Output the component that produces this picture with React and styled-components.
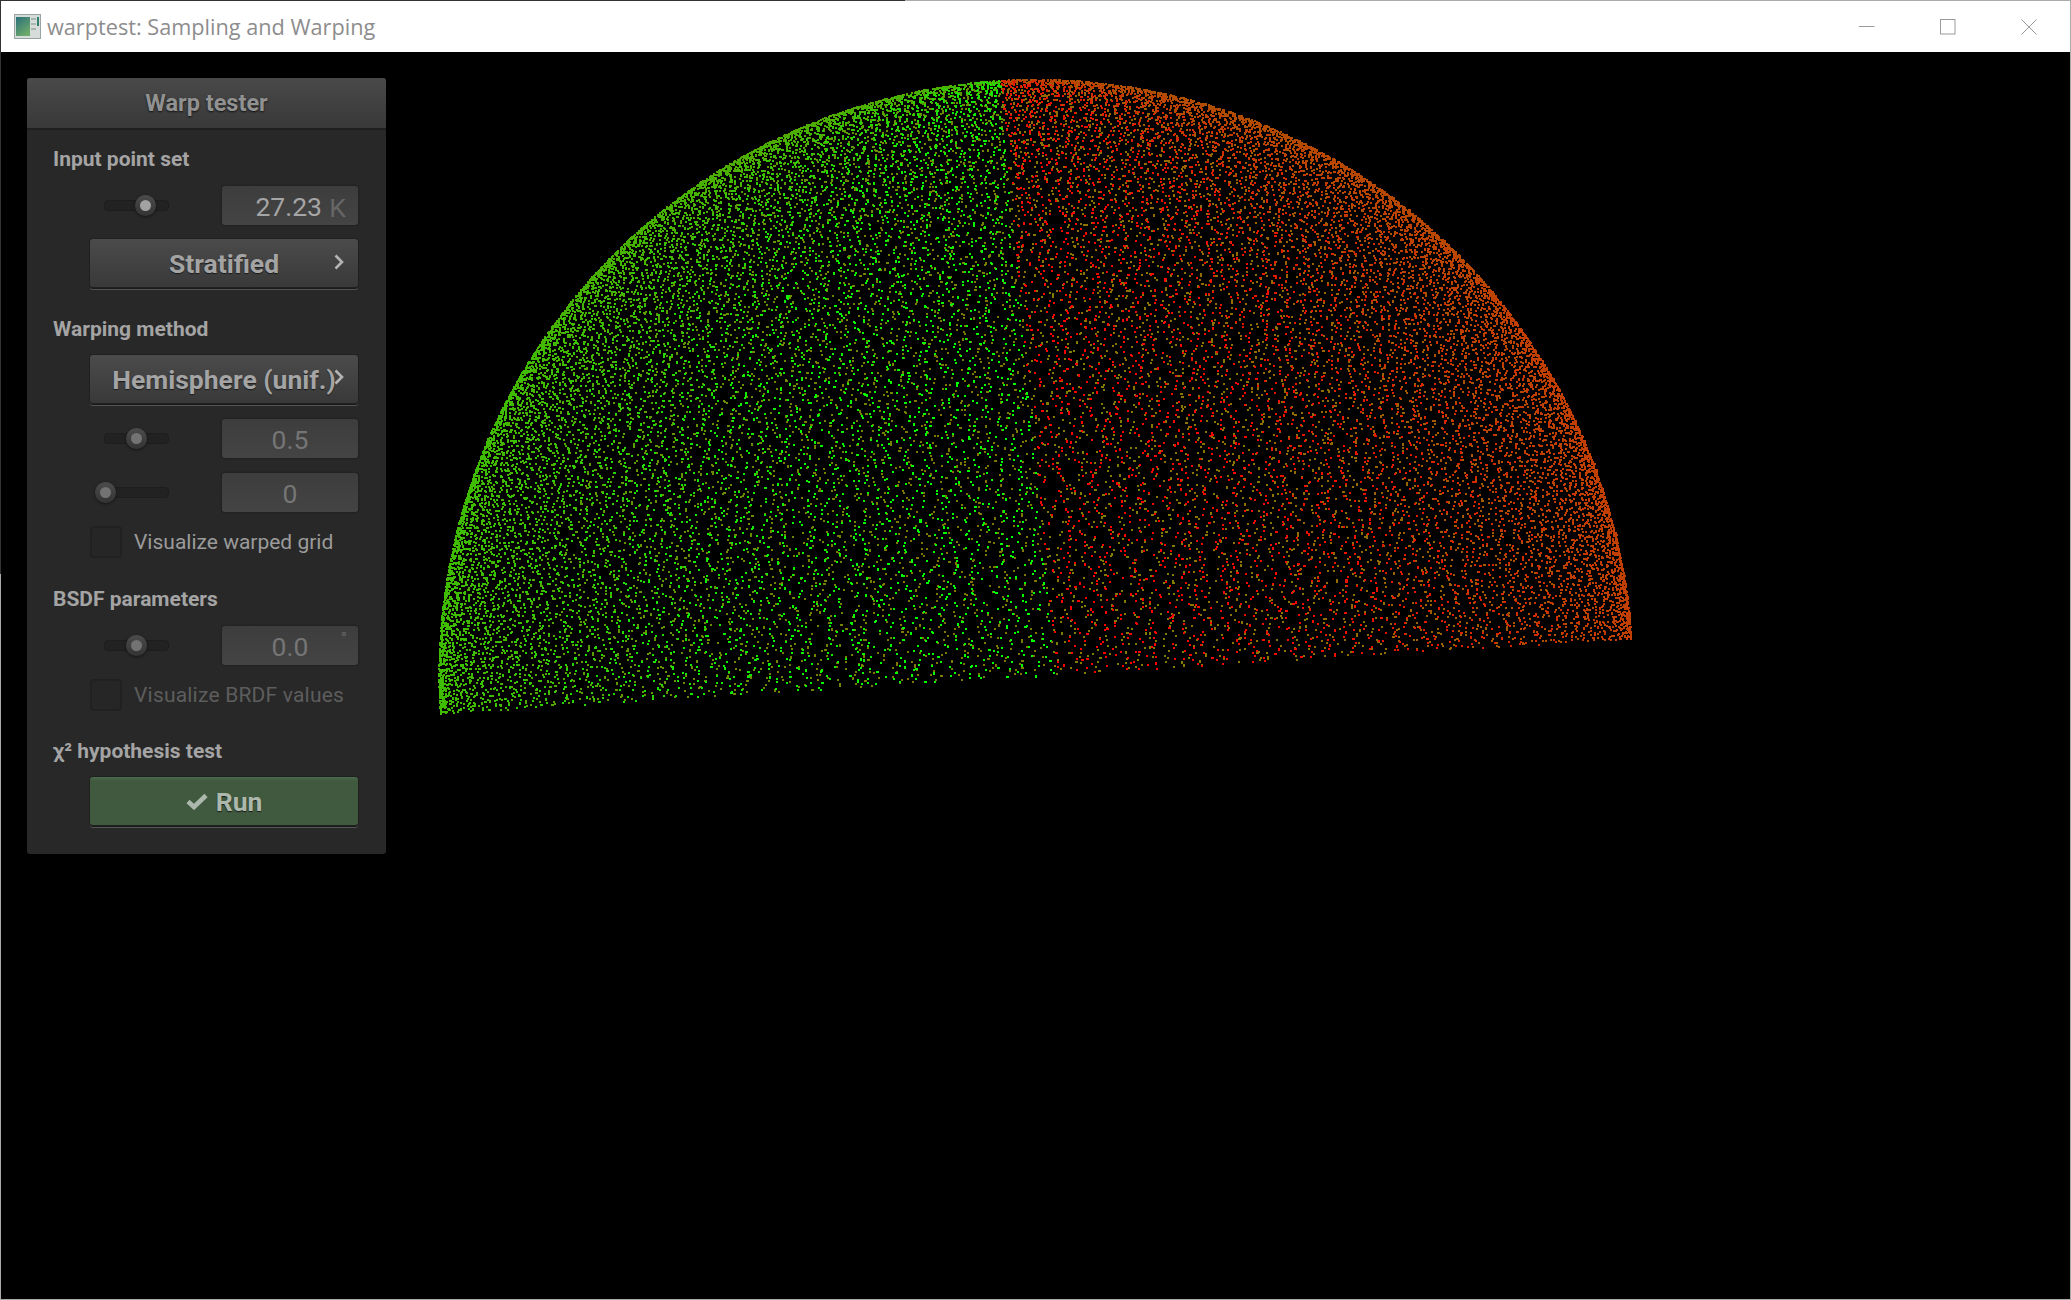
import { useMemo } from "react";
import styled, { createGlobalStyle } from "styled-components";

const GlobalStyle = createGlobalStyle`
  html, body { margin: 0; padding: 0; background: #000; }
`;

const Frame = styled.div`
  position: relative;
  box-sizing: border-box;
  width: 2071px;
  height: 1300px;
  display: flex;
  flex-direction: column;
  border: 1px solid #ababab;
  background: #000;
  /* the frame is darker along part of the top and left edge */
  &::before {
    content: "";
    position: absolute;
    left: -1px;
    top: -1px;
    width: 905px;
    height: 1px;
    background: #333;
  }
  &::after {
    content: "";
    position: absolute;
    left: -1px;
    top: -1px;
    width: 1px;
    height: 574px;
    background: #333;
  }
`;

const TitleBar = styled.div`
  flex: 0 0 51px;
  display: flex;
  align-items: center;
  background: #fff;
  padding-left: 13px;
`;

const WindowTitle = styled.span`
  margin-left: 6px;
  font: 400 21.7px "Open Sans", sans-serif;
  color: #8d8d8d;
  white-space: nowrap;
`;

const WindowButtons = styled.div`
  margin-left: auto;
  display: flex;
  margin-right: 33px;
  gap: 65px;
`;

const Viewport = styled.div`
  position: relative;
  flex: 1;
  background: #000;
  overflow: hidden;
`;

const Plot = styled.svg`
  display: block;
  width: 100%;
  height: 100%;
`;

const Panel = styled.div`
  position: absolute;
  left: 26px;
  top: 26px;
  width: 359px;
  border-radius: 3px;
  background: #282828;
  padding-bottom: 27px;
`;

const PanelHeader = styled.div`
  height: 50px;
  display: flex;
  align-items: center;
  justify-content: center;
  border-radius: 3px 3px 0 0;
  background: linear-gradient(#494949, #393939);
  border-bottom: 2px solid #1f1f1f;
  font: 700 23.5px Roboto, sans-serif;
  color: #919191;
  text-shadow: 0 1px 2px #111;
`;

const PanelBody = styled.div`
  padding: 0 28px 0 26px;
`;

const Section = styled.section`
  margin-top: ${(p) => p.$top}px;
`;

const SectionLabel = styled.div`
  height: 24px;
  font: 700 21px/24px Roboto, sans-serif;
  color: #a4a4a4;
  white-space: nowrap;
`;

const Stack = styled.div`
  margin-top: 14px;
  padding-left: 37px;
  display: flex;
  flex-direction: column;
  gap: 13px;
`;

const Row = styled.div`
  display: grid;
  grid-template-columns: 132px 136px;
  align-items: center;
  height: 41px;
`;

const SliderTrack = styled.div`
  position: relative;
  box-sizing: border-box;
  margin-left: 14px;
  width: 65px;
  height: 11px;
  border-radius: 4px;
  background: #222;
  border: 1px solid #1d1d1d;
`;

const SliderKnob = styled.div`
  position: absolute;
  top: 50%;
  width: 21px;
  height: 21px;
  margin: -10.5px 0 0 -10.5px;
  border-radius: 50%;
  background: linear-gradient(#4c4c4c, #333);
  box-shadow: 0 1px 3px #151515;
  display: flex;
  align-items: center;
  justify-content: center;
  &::after {
    content: "";
    width: 11px;
    height: 11px;
    border-radius: 50%;
    background: ${(p) => (p.$on ? "#a2a2a2" : "#737373")};
  }
`;

const NumberBox = styled.div`
  position: relative;
  box-sizing: border-box;
  height: 39px;
  border-radius: 3px;
  box-shadow: 0 0 0 1.5px #232323;
  background: linear-gradient(#3d3d3d, #444);
  display: flex;
  align-items: center;
  justify-content: ${(p) => (p.$unit ? "flex-end" : "center")};
  padding-right: ${(p) => (p.$unit ? "36px" : "0")};
  padding-top: 2px;
  font: 400 26.5px Roboto, sans-serif;
  color: ${(p) => (p.$on ? "#a5a5a5" : "#757575")};
`;

const Unit = styled.span`
  position: absolute;
  right: 12px;
  top: 6px;
  font: 400 26.5px Roboto, sans-serif;
  color: #666;
`;

const DegreeUnit = styled(Unit)`
  top: 2px;
  right: 11px;
  font-size: 17px;
`;

const PushButton = styled.div`
  position: relative;
  box-sizing: border-box;
  height: 48px;
  margin-bottom: 2px;
  border-radius: 3px;
  box-shadow: 0 0 0 1px #202020, 0 2px 0 #1a1a1a, 0 3px 0 #545454;
  background: ${(p) =>
    p.$green
      ? "linear-gradient(#4d6a4c 0, #40593f 8%, #3f5a3e 100%)"
      : "linear-gradient(#4b4b4b, #393939)"};
  display: flex;
  align-items: center;
  justify-content: center;
  gap: 8px;
  font: 700 26.5px Roboto, sans-serif;
  color: ${(p) => (p.$green ? "#adb8ac" : "#a4a4a4")};
  text-shadow: 0 1px 1px #1c1c1c;
  white-space: nowrap;
`;

const Chevron = styled.svg`
  position: absolute;
  right: 14px;
  top: ${(p) => p.$top}px;
`;

const CheckRow = styled.div`
  display: flex;
  align-items: center;
  gap: 12px;
  height: 31px;
`;

const CheckBox = styled.div`
  box-sizing: border-box;
  width: 32px;
  height: 32px;
  border-radius: 4px;
  background: #262626;
  border: 2px solid #212121;
`;

const CheckLabel = styled.span`
  font: 400 21px Roboto, sans-serif;
  letter-spacing: ${(p) => (p.$on ? "0" : "0.2px")};
  color: ${(p) => (p.$on ? "#9b9b9b" : "#5d5d5d")};
  white-space: nowrap;
`;

// hemisphere placement in viewport pixels (edge-on, slightly rolled)
const CENTER = { x: 1034, y: 623.5 };
const RADIUS = 595.5;
const ROLL = 0.0628;
const COUNT_ROOT = 165;
const LEVELS = 14;

function mulberry(seed) {
  return () => {
    seed |= 0;
    seed = (seed + 0x6d2b79f5) | 0;
    let t = Math.imul(seed ^ (seed >>> 15), 1 | seed);
    t = (t + Math.imul(t ^ (t >>> 7), 61 | t)) ^ t;
    return ((t ^ (t >>> 14)) >>> 0) / 4294967296;
  };
}

function buildPoints() {
  const rand = mulberry(2071);
  const buckets = { g: [], r: [] };
  ["g", "r"].forEach((k) => {
    for (let i = 0; i <= LEVELS; i++) buckets[k].push([]);
  });

  for (let i = 0; i < COUNT_ROOT; i++) {
    for (let j = 0; j < COUNT_ROOT; j++) {
      const z = (i + rand()) / COUNT_ROOT;
      const phi = ((j + rand()) / COUNT_ROOT) * Math.PI * 2;
      const rho = Math.sqrt(1 - z * z);
      const a = rho * Math.cos(phi);
      const px = Math.round(CENTER.x + RADIUS * (a - z * ROLL));
      const py = Math.round(CENTER.y - RADIUS * (z + a * ROLL));
      // split line between the two halves
      const side = px < 999 + 0.09 * (py - 27) ? "g" : "r";
      // depth decides how far a point sits from the mid colour
      const s = Math.sin(phi);
      const abs = Math.abs(s);
      let depth = Math.sign(s) * Math.pow(abs, 2) * Math.pow(rho, 0.25);
      // the rim turns more olive towards the top of the dome
      depth -= 0.35 * Math.pow(z, 3) * (1 - abs);
      depth = Math.max(-1, Math.min(1, depth));
      const level = Math.round(((depth + 1) / 2) * LEVELS);
      const roll = rand();
      const w = roll < 0.08 ? 3 : 2;
      const h = roll > 0.92 ? 3 : 2;
      buckets[side][level].push(`M${px} ${py}h${w}v${h}h${-w}z`);
    }
  }

  const back = { g: [125, 120, 0], r: [130, 125, 0] };
  const front = { g: [0, 255, 0], r: [255, 0, 0] };
  const paths = [];
  ["g", "r"].forEach((k) => {
    buckets[k].forEach((parts, level) => {
      const t = level / LEVELS;
      const [r, g, b] = back[k].map((c, n) => Math.round(c + (front[k][n] - c) * t));
      paths.push({ id: k + level, fill: `rgb(${r},${g},${b})`, d: parts.join("") });
    });
  });
  return paths;
}

function PointCloud() {
  const paths = useMemo(buildPoints, []);
  return (
    <Plot viewBox="0 0 2069 1247" shapeRendering="crispEdges">
      {paths.map((p) => (
        <path key={p.id} d={p.d} fill={p.fill} />
      ))}
    </Plot>
  );
}

function AppIcon() {
  return (
    <svg width="27" height="25" viewBox="0 0 27 25">
      <defs>
        <linearGradient id="icoGrad" x1="0" y1="0" x2="0.6" y2="1">
          <stop offset="0" stopColor="#2a6f7a" />
          <stop offset="1" stopColor="#6daa6a" />
        </linearGradient>
      </defs>
      <rect x="0.5" y="0.5" width="26" height="24" fill="#d5dcd9" stroke="#9aa3a3" />
      <rect x="2" y="3" width="14" height="19" fill="url(#icoGrad)" />
      <rect x="17" y="4" width="5" height="2" fill="#aab5b0" />
      <rect x="17" y="9" width="5" height="2" fill="#aab5b0" />
      <rect x="17" y="14" width="5" height="2" fill="#aab5b0" />
      <rect x="23" y="3" width="2" height="9" fill="#2f7f6e" />
    </svg>
  );
}

function MinimizeIcon() {
  return (
    <svg width="16" height="16" viewBox="0 0 16 16">
      <path d="M0 7.5h15.5" stroke="#9a9a9a" strokeWidth="1" fill="none" />
    </svg>
  );
}

function MaximizeIcon() {
  return (
    <svg width="16" height="16" viewBox="0 0 16 16">
      <rect x="0.5" y="0.5" width="14.5" height="14.5" stroke="#9a9a9a" fill="none" />
    </svg>
  );
}

function CloseIcon() {
  return (
    <svg width="16" height="16" viewBox="0 0 16 16">
      <path d="M0.5 0.5L15.5 15.5M15.5 0.5L0.5 15.5" stroke="#9a9a9a" fill="none" />
    </svg>
  );
}

function ArrowIcon({ top }) {
  return (
    <Chevron $top={top} width="10" height="16" viewBox="0 0 10 16">
      <path d="M1.5 1.5L8 8L1.5 14.5" stroke="#b4b4b4" strokeWidth="2.6" fill="none" />
    </Chevron>
  );
}

function CheckIcon() {
  return (
    <svg width="22" height="17" viewBox="0 0 22 17">
      <path d="M2 8.5L8 14L20 2.5" stroke="#adb8ac" strokeWidth="4.6" fill="none" />
    </svg>
  );
}

function SliderRow({ pos, on, value, unit, degree }) {
  return (
    <Row>
      <SliderTrack>
        <SliderKnob $on={on} style={{ left: `${pos * 100}%` }} />
      </SliderTrack>
      <NumberBox $on={on} $unit={unit}>
        {value}
        {degree ? <DegreeUnit>°</DegreeUnit> : unit && <Unit>{unit}</Unit>}
      </NumberBox>
    </Row>
  );
}

export default function App() {
  return (
    <Frame>
      <GlobalStyle />
      <TitleBar>
        <AppIcon />
        <WindowTitle>warptest: Sampling and Warping</WindowTitle>
        <WindowButtons>
          <MinimizeIcon />
          <MaximizeIcon />
          <CloseIcon />
        </WindowButtons>
      </TitleBar>
      <Viewport>
        <PointCloud />
        <Panel>
          <PanelHeader>Warp tester</PanelHeader>
          <PanelBody>
            <Section $top={17}>
              <SectionLabel>Input point set</SectionLabel>
              <Stack>
                <SliderRow pos={0.65} on value="27.23" unit="K" />
                <PushButton>
                  Stratified
                  <ArrowIcon top={15} />
                </PushButton>
              </Stack>
            </Section>
            <Section $top={28}>
              <SectionLabel>Warping method</SectionLabel>
              <Stack>
                <PushButton>
                  Hemisphere (unif.)
                  <ArrowIcon top={14} />
                </PushButton>
                <SliderRow pos={0.5} value="0.5" />
                <SliderRow pos={0} value="0" />
                <CheckRow>
                  <CheckBox />
                  <CheckLabel $on>Visualize warped grid</CheckLabel>
                </CheckRow>
              </Stack>
            </Section>
            <Section $top={30}>
              <SectionLabel>BSDF parameters</SectionLabel>
              <Stack>
                <SliderRow pos={0.5} value="0.0" degree />
                <CheckRow>
                  <CheckBox />
                  <CheckLabel>Visualize BRDF values</CheckLabel>
                </CheckRow>
              </Stack>
            </Section>
            <Section $top={29}>
              <SectionLabel>χ² hypothesis test</SectionLabel>
              <Stack>
                <PushButton $green>
                  <CheckIcon />
                  Run
                </PushButton>
              </Stack>
            </Section>
          </PanelBody>
        </Panel>
      </Viewport>
    </Frame>
  );
}
